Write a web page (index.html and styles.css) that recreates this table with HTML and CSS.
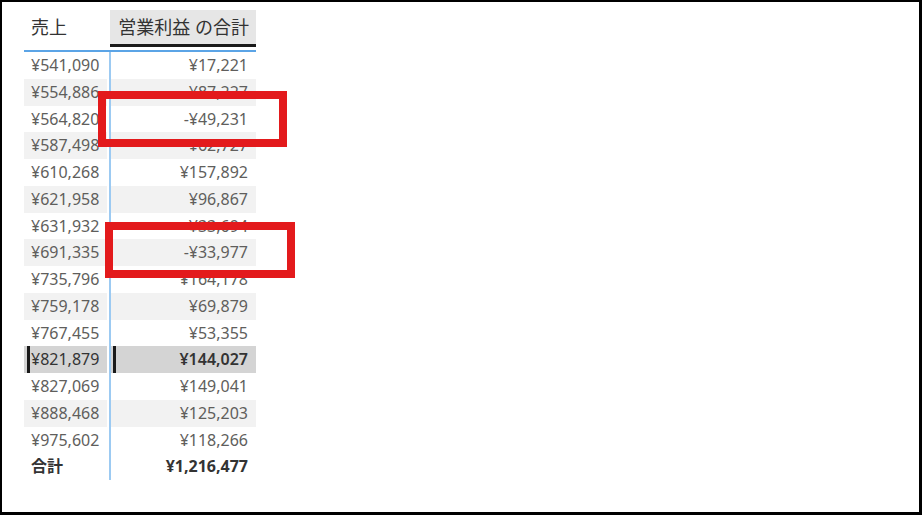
FILE: index.html
```html
<!DOCTYPE html>
<html lang="ja">
<head>
<meta charset="utf-8">
<link rel="stylesheet" href="styles.css">
</head>
<body>
<div class="frame">
  <div class="matrix">
    <div class="head">
      <div class="h1">売上</div>
      <div class="h2">営業利益 の合計</div>
    </div>
    <div class="rule"></div>
    <div class="tbody">
      <div class="c1">¥541,090</div><div class="c2">¥17,221</div>
      <div class="c1 alt">¥554,886</div><div class="c2 alt">¥87,227</div>
      <div class="c1">¥564,820</div><div class="c2">-¥49,231</div>
      <div class="c1 alt">¥587,498</div><div class="c2 alt">¥62,727</div>
      <div class="c1">¥610,268</div><div class="c2">¥157,892</div>
      <div class="c1 alt">¥621,958</div><div class="c2 alt">¥96,867</div>
      <div class="c1">¥631,932</div><div class="c2">¥33,694</div>
      <div class="c1 alt">¥691,335</div><div class="c2 alt">-¥33,977</div>
      <div class="c1">¥735,796</div><div class="c2">¥164,178</div>
      <div class="c1 alt">¥759,178</div><div class="c2 alt">¥69,879</div>
      <div class="c1">¥767,455</div><div class="c2">¥53,355</div>
      <div class="c1 sel">¥821,879</div><div class="c2 sel">¥144,027</div>
      <div class="c1">¥827,069</div><div class="c2">¥149,041</div>
      <div class="c1 alt">¥888,468</div><div class="c2 alt">¥125,203</div>
      <div class="c1">¥975,602</div><div class="c2">¥118,266</div>
      <div class="c1 total">合計</div><div class="c2 total">¥1,216,477</div>
    </div>
  </div>
  <div class="mark mark1"></div>
  <div class="mark mark2"></div>
</div>
</body>
</html>
```
FILE: styles.css
```css
html, body {
  margin: 0;
  padding: 0;
  background: #ffffff;
}
.frame {
  position: relative;
  box-sizing: border-box;
  width: 922px;
  height: 515px;
  border-style: solid;
  border-color: #000;
  border-width: 2px 3px 3px 2px;
  background: #fff;
  font-family: "Noto Sans", "Noto Sans CJK JP", sans-serif;
  color: #605e5c;
}
.matrix {
  padding: 8px 0 0 22px;
  width: 232px;
}
.head {
  display: grid;
  grid-template-columns: 86px 146px;
  height: 37px;
}
.h1 {
  font-size: 18px;
  color: #333;
  line-height: 34px;
  padding-left: 7px;
}
.h2 {
  background: #e6e6e6;
  border-bottom: 3px solid #1a1a1a;
  font-size: 18px;
  color: #333;
  line-height: 34px;
  text-align: right;
  padding-right: 7px;
  white-space: nowrap;
}
.rule {
  margin-top: 3px;
  height: 2px;
  background: #5ba4e6;
}
.tbody {
  display: grid;
  grid-template-columns: 83px 145px;
  grid-auto-rows: 26.75px;
  column-gap: 4px;
  background: linear-gradient(to right, transparent 85px, #9ccaf2 85px, #9ccaf2 87px, transparent 87px);
  font-size: 16px;
  line-height: 26.75px;
}
.c1 {
  padding-left: 7px;
  white-space: nowrap;
}
.c2 {
  text-align: right;
  padding-right: 8px;
  white-space: nowrap;
}
.alt {
  background: #f2f2f2;
}
.c1.sel {
  background: linear-gradient(to right, #d4d4d4 3px, #1a1a1a 3px, #1a1a1a 6px, #d4d4d4 6px);
  color: #333;
}
.c2.sel {
  background: linear-gradient(to right, #d4d4d4 2px, #1a1a1a 2px, #1a1a1a 5px, #d4d4d4 5px);
  color: #333;
  font-weight: 600;
}
.total {
  color: #333;
  font-weight: 700;
}
.mark {
  position: absolute;
  box-sizing: border-box;
  border: 8px solid #e31a1c;
}
.mark1 {
  left: 96px;
  top: 89px;
  width: 189px;
  height: 56px;
}
.mark2 {
  left: 103px;
  top: 220px;
  width: 190px;
  height: 56px;
}
```
